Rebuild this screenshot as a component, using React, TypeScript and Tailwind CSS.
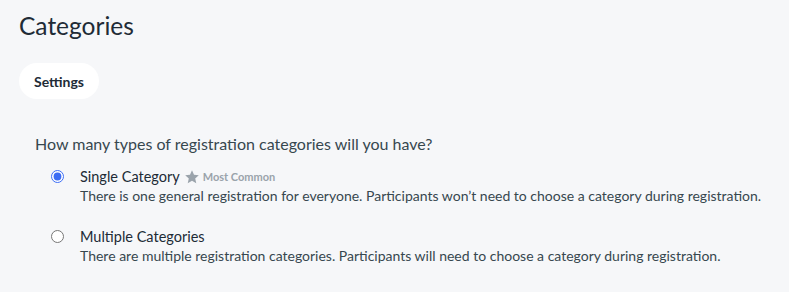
import { useState } from "react";

const options = [
  {
    id: "single",
    label: "Single Category",
    badge: "Most Common",
    desc: "There is one general registration for everyone. Participants won’t need to choose a category during registration.",
  },
  {
    id: "multiple",
    label: "Multiple Categories",
    desc: "There are multiple registration categories. Participants will need to choose a category during registration.",
  },
];

export default function App() {
  const [selected, setSelected] = useState("single");

  return (
    <div className="min-h-screen bg-[#f6f7f9] font-['Lato',sans-serif] text-[#263238]">
      <div className="px-[19px] pt-[11px]">
        <h1 className="text-[24.5px] leading-[30px] text-[#212b36]">Categories</h1>
        <div className="mt-[22px]">
          <span className="inline-flex h-[36px] items-center rounded-full bg-white px-[15px] text-[14px] font-bold text-[#212b36]">
            Settings
          </span>
        </div>
        <div className="mt-[35px] pl-[16px]">
          <p className="text-[16px] leading-[20px] text-[#37474f]">
            How many types of registration categories will you have?
          </p>
          <div className="mt-[13px] flex flex-col gap-[22px]">
            {options.map((o) => (
              <label key={o.id} className="flex cursor-pointer items-start">
                <input
                  type="radio"
                  name="cat"
                  checked={selected === o.id}
                  onChange={() => setSelected(o.id)}
                  className="ml-[16px] mt-[3px] h-[13px] w-[13px] accent-[#3b6cf4]"
                />
                <div className="ml-[16px]">
                  <div className="flex items-center text-[14.5px] leading-[19px] text-[#212b36]">
                    {o.label}
                    {o.badge && (
                      <span className="ml-[4px] flex items-center text-[11px] font-bold text-[#9aa3ab]">
                        <svg viewBox="0 0 24 24" className="mr-[3px] h-[16px] w-[16px] fill-[#9aa3ab]">
                          <path d="M12 2l3 6.6 7.2.7-5.4 4.8 1.6 7.1L12 17.5l-6.4 3.7 1.6-7.1-5.4-4.8 7.2-.7z" />
                        </svg>
                        {o.badge}
                      </span>
                    )}
                  </div>
                  <p className="mt-[1px] text-[14px] leading-[18px] text-[#37474f]">{o.desc}</p>
                </div>
              </label>
            ))}
          </div>
        </div>
      </div>
    </div>
  );
}
